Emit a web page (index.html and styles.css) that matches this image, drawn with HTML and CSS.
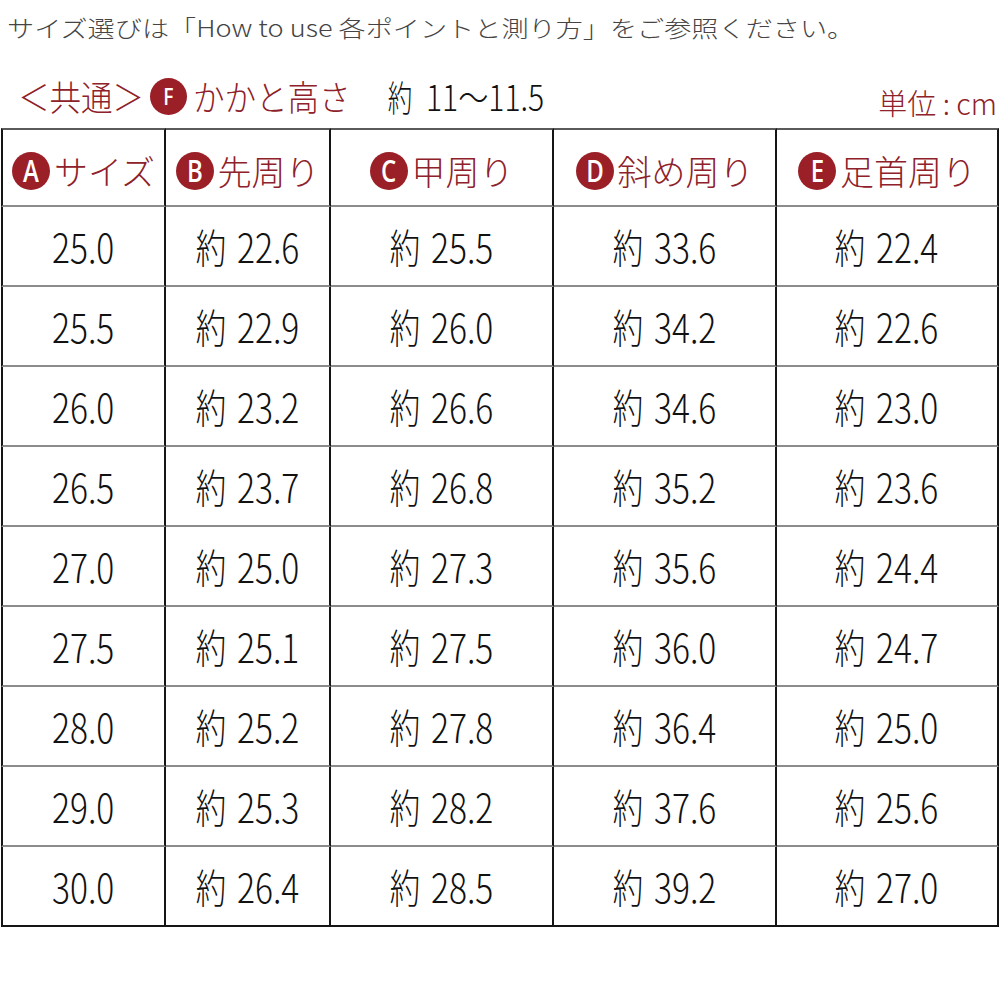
FILE: index.html
```html
<!DOCTYPE html>
<html lang="ja">
<head>
<meta charset="utf-8">
<title>サイズ表</title>
<link rel="stylesheet" href="styles.css">
</head>
<body>
<div class="page">
  <p class="note"><span class="note-text">サイズ選びは「How to use 各ポイントと測り方」をご参照ください。</span></p>
  <div class="title-row">
    <div class="title-left">
      <span class="common">＜共通＞</span>
      <span class="badge badge-lg"><span class="bl">F</span></span>
      <span class="heel">かかと高さ</span>
      <span class="heel-val"><span class="tk">約</span><span class="tn">11〜11.5</span></span>
    </div>
    <span class="unit">単位 : cm</span>
  </div>
  <table class="size-table">
    <thead>
      <tr>
        <th class="c1"><div class="hd"><span class="badge"><span class="bl">A</span></span><span class="hd-text">サイズ</span></div></th>
        <th class="c2"><div class="hd"><span class="badge"><span class="bl">B</span></span><span class="hd-text">先周り</span></div></th>
        <th class="c3"><div class="hd"><span class="badge"><span class="bl">C</span></span><span class="hd-text">甲周り</span></div></th>
        <th class="c4"><div class="hd"><span class="badge"><span class="bl">D</span></span><span class="hd-text">斜め周り</span></div></th>
        <th class="c5"><div class="hd"><span class="badge"><span class="bl">E</span></span><span class="hd-text">足首周り</span></div></th>
      </tr>
    </thead>
    <tbody>
      <tr><td><div class="cell"><span class="n">25.0</span></div></td><td><div class="cell"><span class="k">約</span><span class="n">22.6</span></div></td><td><div class="cell"><span class="k">約</span><span class="n">25.5</span></div></td><td><div class="cell"><span class="k">約</span><span class="n">33.6</span></div></td><td><div class="cell"><span class="k">約</span><span class="n">22.4</span></div></td></tr>
      <tr><td><div class="cell"><span class="n">25.5</span></div></td><td><div class="cell"><span class="k">約</span><span class="n">22.9</span></div></td><td><div class="cell"><span class="k">約</span><span class="n">26.0</span></div></td><td><div class="cell"><span class="k">約</span><span class="n">34.2</span></div></td><td><div class="cell"><span class="k">約</span><span class="n">22.6</span></div></td></tr>
      <tr><td><div class="cell"><span class="n">26.0</span></div></td><td><div class="cell"><span class="k">約</span><span class="n">23.2</span></div></td><td><div class="cell"><span class="k">約</span><span class="n">26.6</span></div></td><td><div class="cell"><span class="k">約</span><span class="n">34.6</span></div></td><td><div class="cell"><span class="k">約</span><span class="n">23.0</span></div></td></tr>
      <tr><td><div class="cell"><span class="n">26.5</span></div></td><td><div class="cell"><span class="k">約</span><span class="n">23.7</span></div></td><td><div class="cell"><span class="k">約</span><span class="n">26.8</span></div></td><td><div class="cell"><span class="k">約</span><span class="n">35.2</span></div></td><td><div class="cell"><span class="k">約</span><span class="n">23.6</span></div></td></tr>
      <tr><td><div class="cell"><span class="n">27.0</span></div></td><td><div class="cell"><span class="k">約</span><span class="n">25.0</span></div></td><td><div class="cell"><span class="k">約</span><span class="n">27.3</span></div></td><td><div class="cell"><span class="k">約</span><span class="n">35.6</span></div></td><td><div class="cell"><span class="k">約</span><span class="n">24.4</span></div></td></tr>
      <tr><td><div class="cell"><span class="n">27.5</span></div></td><td><div class="cell"><span class="k">約</span><span class="n">25.1</span></div></td><td><div class="cell"><span class="k">約</span><span class="n">27.5</span></div></td><td><div class="cell"><span class="k">約</span><span class="n">36.0</span></div></td><td><div class="cell"><span class="k">約</span><span class="n">24.7</span></div></td></tr>
      <tr><td><div class="cell"><span class="n">28.0</span></div></td><td><div class="cell"><span class="k">約</span><span class="n">25.2</span></div></td><td><div class="cell"><span class="k">約</span><span class="n">27.8</span></div></td><td><div class="cell"><span class="k">約</span><span class="n">36.4</span></div></td><td><div class="cell"><span class="k">約</span><span class="n">25.0</span></div></td></tr>
      <tr><td><div class="cell"><span class="n">29.0</span></div></td><td><div class="cell"><span class="k">約</span><span class="n">25.3</span></div></td><td><div class="cell"><span class="k">約</span><span class="n">28.2</span></div></td><td><div class="cell"><span class="k">約</span><span class="n">37.6</span></div></td><td><div class="cell"><span class="k">約</span><span class="n">25.6</span></div></td></tr>
      <tr class="last"><td><div class="cell"><span class="n">30.0</span></div></td><td><div class="cell"><span class="k">約</span><span class="n">26.4</span></div></td><td><div class="cell"><span class="k">約</span><span class="n">28.5</span></div></td><td><div class="cell"><span class="k">約</span><span class="n">39.2</span></div></td><td><div class="cell"><span class="k">約</span><span class="n">27.0</span></div></td></tr>
    </tbody>
  </table>
</div>
</body>
</html>
```
FILE: styles.css
```css
html, body {
  margin: 0;
  padding: 0;
  background: #fff;
}
body {
  font-family: "Noto Sans CJK JP", "Noto Sans", sans-serif;
  font-weight: 300;
  color: #111;
}
.page {
  width: 1001px;
}
.note {
  margin: 0;
  height: 56px;
  padding: 10px 0 0 7px;
  box-sizing: border-box;
  font-size: 23px;
  line-height: 34px;
  color: #444;
  white-space: nowrap;
}
.note-text {
  display: inline-block;
  transform: scaleX(1.18);
  transform-origin: left center;
}
.title-row {
  display: flex;
  justify-content: space-between;
  align-items: center;
  height: 72px;
  padding: 8px 4px 0 18px;
  box-sizing: border-box;
}
.title-left {
  display: flex;
  align-items: center;
}
.common, .heel {
  display: inline-block;
  font-size: 35px;
  line-height: 40px;
  color: #8e2129;
  white-space: nowrap;
  transform: scaleX(0.9);
  transform-origin: left center;
}
.common { width: 128px; }
.heel { width: 158px; margin-left: 6px; }
.heel-val {
  display: inline-flex;
  align-items: center;
  margin-left: 37px;
  color: #111;
  white-space: nowrap;
}
.tk {
  display: inline-block;
  font-size: 36px;
  line-height: 40px;
  transform: scaleX(0.68);
  margin: 0 -6px;
}
.tn {
  display: inline-block;
  font-size: 35px;
  line-height: 40px;
  transform: scaleX(0.86);
  transform-origin: left center;
  margin-left: 14px;
}
.unit {
  font-size: 29px;
  line-height: 34px;
  color: #8e2129;
  margin-top: 12px;
  white-space: nowrap;
}
.badge {
  display: inline-flex;
  align-items: center;
  justify-content: center;
  width: 38px;
  height: 38px;
  border-radius: 50%;
  background: #9a1f27;
  color: #fff;
  font-family: "Open Sans", sans-serif;
  font-weight: 600;
  font-size: 30px;
  line-height: 1;
  flex: none;
}
.bl {
  display: inline-block;
  transform: scaleX(0.8);
}
.badge-lg {
  margin-left: 4px;
  width: 37px;
  height: 37px;
  font-size: 24px;
}
.size-table {
  margin-left: 1px;
  width: 998px;
  table-layout: fixed;
  border-collapse: separate;
  border-spacing: 0;
}
.size-table th, .size-table td {
  padding: 0;
  box-sizing: border-box;
  border-right: 2px solid #151515;
  border-bottom: 2px solid #8c8c8c;
}
.size-table th {
  border-top: 2px solid #5a5a5a;
  font-weight: 300;
}
.size-table th:first-child, .size-table td:first-child {
  border-left: 2px solid #151515;
}
.size-table tr.last td {
  border-bottom: 2px solid #151515;
}
.c1, .c2 { width: 165px; }
.c3, .c4 { width: 223px; }
.c5 { width: 222px; }
.hd {
  height: 75px;
  padding-top: 6px;
  box-sizing: border-box;
  display: flex;
  align-items: center;
  justify-content: center;
  gap: 4px;
}
.hd-text {
  font-size: 34px;
  line-height: 40px;
  color: #8e2129;
  white-space: nowrap;
}
.cell {
  height: 78px;
  display: flex;
  align-items: center;
  justify-content: center;
  white-space: nowrap;
  color: #111;
}
.k {
  display: inline-block;
  font-size: 40px;
  line-height: 46px;
  transform: scaleX(0.76);
  margin: 0 -5px;
}
.n {
  display: inline-block;
  font-size: 40px;
  line-height: 46px;
  transform: scaleX(0.84);
  margin: 0 -6px;
}
.k + .n {
  margin-left: 5px;
}
```
